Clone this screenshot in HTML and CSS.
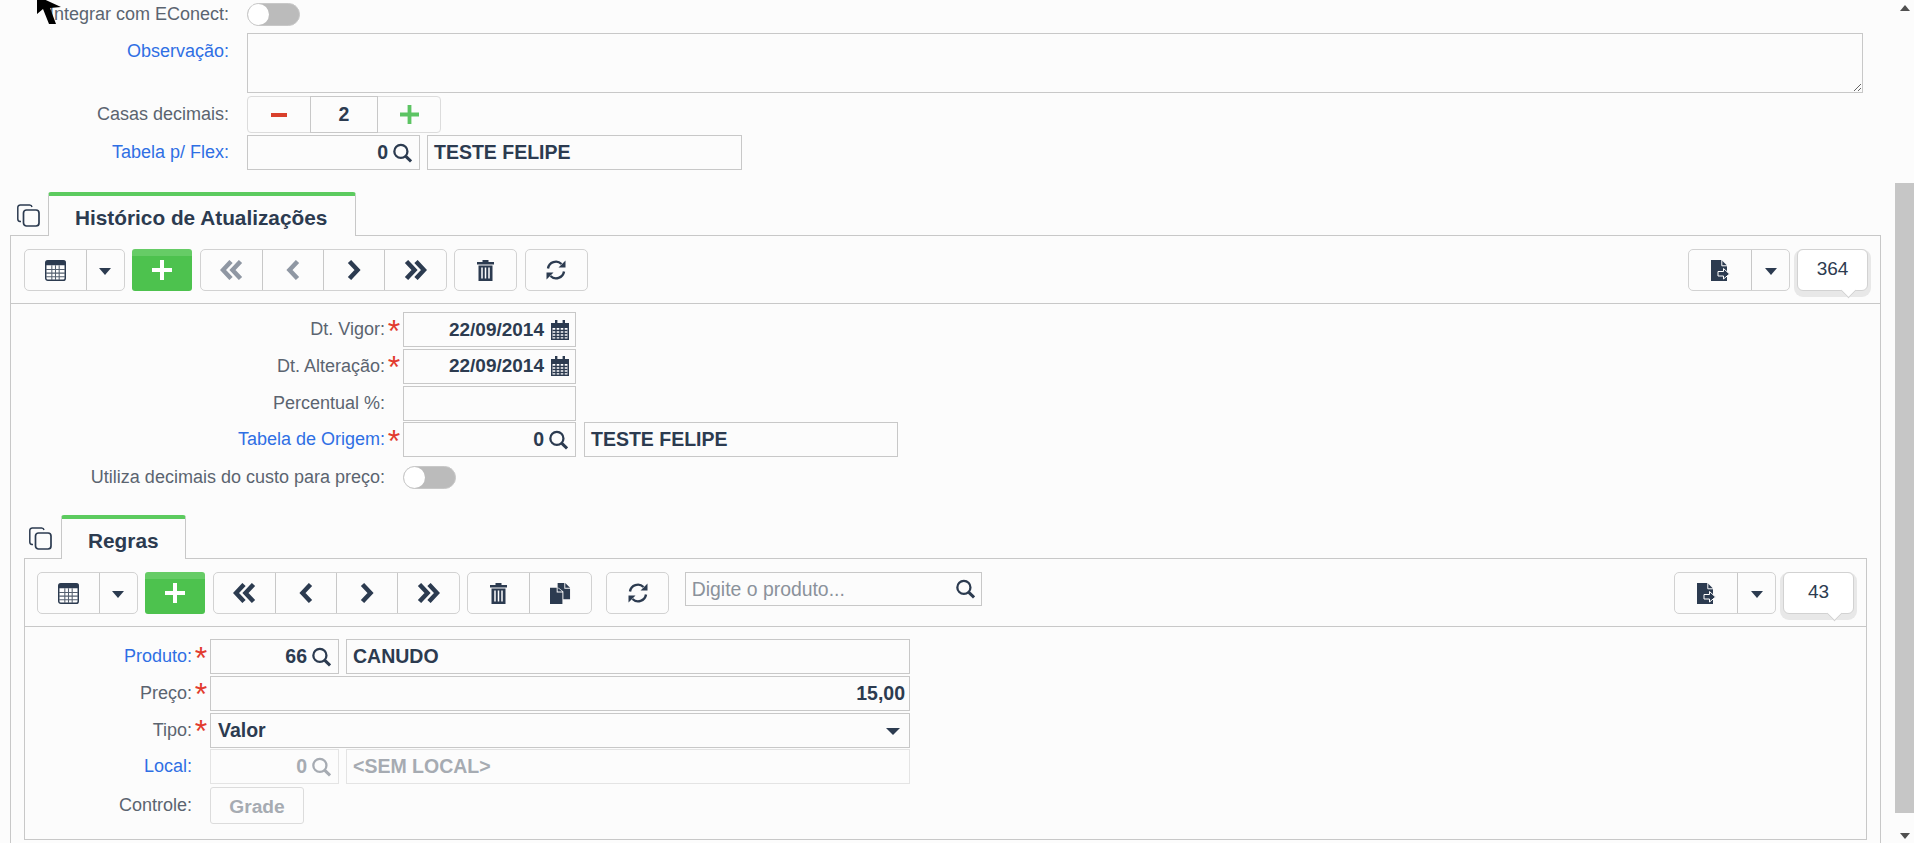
FILE: index.html
```html
<!DOCTYPE html>
<html lang="pt-BR">
<head>
    <meta charset="UTF-8">
    <title>Tabela de Preços</title>
    <link rel="stylesheet" href="styles.css">
</head>
<body>
    <svg class="defs" aria-hidden="true">
        <symbol id="i-table" viewBox="0 0 20 20">
            <rect x="0.7" y="0.7" width="18.6" height="18.6" rx="2" fill="#fff" stroke="#2c3b50" stroke-width="1.4"/>
            <rect x="0.7" y="0.7" width="18.6" height="4.3" fill="#2c3b50"/>
            <path d="M1 9h18M1 12.5h18M1 16h18M6.5 5v14M10 5v14M13.5 5v14" stroke="#55606f" stroke-width="1" fill="none"/>
        </symbol>
        <symbol id="i-search" viewBox="0 0 20 20">
            <circle cx="8.300" cy="8.300" r="6.900" fill="none" stroke="currentColor" stroke-width="2.400"/>
            <path d="M13 13l6 6" stroke="currentColor" stroke-width="3.200" fill="none"/>
        </symbol>
        <symbol id="i-calendar" viewBox="0 0 18 20">
            <path d="M4 0h2.400v3H11.600V0H14v3h4v17H0V3h4z" fill="#2c3b50"/>
            <path d="M1.500 8h15v10.500h-15z" fill="#fff"/>
            <path d="M1.500 10.500h15M1.500 13.500h15M1.500 16.500h15M5 8v11M9 8v11M13 8v11" stroke="#2c3b50" stroke-width="1.400" fill="none"/>
        </symbol>
        <symbol id="i-plus" viewBox="0 0 20 20">
            <path d="M8 0h4v8h8v4h-8v8H8v-8H0V8h8z" fill="currentColor"/>
        </symbol>
        <symbol id="i-first" viewBox="0 0 23 20">
            <path d="M11 1.500L3 10l8 8.500M20.500 1.500L12.500 10l8 8.500" fill="none" stroke="currentColor" stroke-width="4.500"/>
        </symbol>
        <symbol id="i-prev" viewBox="0 0 14 20">
            <path d="M11.500 1.500L3.500 10l8 8.500" fill="none" stroke="currentColor" stroke-width="4.500"/>
        </symbol>
        <symbol id="i-next" viewBox="0 0 14 20">
            <path d="M2.500 1.500L10.500 10l-8 8.500" fill="none" stroke="currentColor" stroke-width="4.500"/>
        </symbol>
        <symbol id="i-last" viewBox="0 0 23 20">
            <path d="M2.500 1.500L10.500 10l-8 8.500M12 1.500L20 10l-8 8.500" fill="none" stroke="currentColor" stroke-width="4.500"/>
        </symbol>
        <symbol id="i-trash" viewBox="0 0 17 22">
            <path d="M5.500 3V1h6v2h5.500v2.500H0V3z" fill="#2c3b50"/>
            <path d="M1.500 6.500h14V22h-14z" fill="#2c3b50"/>
            <path d="M5 8.500v11M8.500 8.500v11M12 8.500v11" stroke="#fff" stroke-width="1.500"/>
        </symbol>
        <symbol id="i-refresh" viewBox="0 0 22 22">
            <path d="M3 9.500A8 8 0 0 1 16.500 5" fill="none" stroke="#2c3b50" stroke-width="2.400"/>
            <path d="M19 12.500A8 8 0 0 1 5.500 17" fill="none" stroke="#2c3b50" stroke-width="2.400"/>
            <path d="M20.500 1.500v7h-7zM1.500 20.500v-7h7z" fill="#2c3b50"/>
        </symbol>
        <symbol id="i-export" viewBox="0 0 19 21">
            <path d="M0 0h10.500L16 5.500V21H0z" fill="#2c3b50"/>
            <path d="M10.800 0v5.800H16.500" fill="none" stroke="#fff" stroke-width="1"/>
            <path d="M7 11.500h5.500V8.500l6 5.500-6 5v-3H7z" fill="#2c3b50" stroke="#fff" stroke-width="1"/>
        </symbol>
        <symbol id="i-copy" viewBox="0 0 23 23">
            <path d="M4 17.500H3a2.500 2.500 0 0 1-2.200-2.500V3.500A2.500 2.500 0 0 1 3.500 1h9a2.500 2.500 0 0 1 2.500 2" fill="none" stroke="#2c3b50" stroke-width="1.500"/>
            <rect x="6.500" y="6" width="15.500" height="16" rx="3" fill="none" stroke="#2c3b50" stroke-width="1.700"/>
        </symbol>
        <symbol id="i-docs" viewBox="0 0 22 22">
            <path d="M8 0h7v6h6v11h-7V9L9 5H8z" fill="#2c3b50"/>
            <path d="M16 0l5 5h-5z" fill="#2c3b50"/>
            <path d="M0 5h7v5h6v12H0z" fill="#2c3b50"/>
            <path d="M8 5l5 4h-5z" fill="#2c3b50"/>
        </symbol>
    </svg>

    <svg class="cursor" viewBox="0 0 26 26" aria-hidden="true">
        <path d="M1 -4L1 14L7 9L13 24H20L14 8L25 7z" fill="#000"/>
    </svg>

    <div class="page">
        <main class="content">
            <div class="top-form">
                <div class="row row-toggle">
                    <div class="label label-top">Integrar com EConect:</div>
                    <div class="toggle"><span class="knob"></span></div>
                </div>
                <div class="row row-obs">
                    <div class="label label-top link label-obs">Observação:</div>
                    <textarea class="obs"></textarea>
                </div>
                <div class="row row-step">
                    <div class="label label-top">Casas decimais:</div>
                    <div class="stepper">
                        <div class="step"><span class="minus"></span></div>
                        <div class="step-value">2</div>
                        <div class="step"><svg class="icon-plus-green"><use href="#i-plus"/></svg></div>
                    </div>
                </div>
                <div class="row row-lookup">
                    <div class="label label-top link">Tabela p/ Flex:</div>
                    <div class="field lookup w-flex">0<svg class="ic-search"><use href="#i-search"/></svg></div>
                    <div class="field text w-flex-name">TESTE FELIPE</div>
                </div>
            </div>

            <div class="tab-strip strip-main">
                <svg class="ic-copy"><use href="#i-copy"/></svg>
                <div class="tab tab-main">Histórico de Atualizações</div>
            </div>
            <section class="panel panel-main">
                <div class="toolbar">
                    <div class="group">
                        <div class="btn btn-view"><svg class="ic-table"><use href="#i-table"/></svg></div>
                        <div class="btn btn-caret"><span class="caret"></span></div>
                    </div>
                    <div class="btn-add"><svg class="ic-plus"><use href="#i-plus"/></svg></div>
                    <div class="group">
                        <div class="btn muted"><svg class="ic-double"><use href="#i-first"/></svg></div>
                        <div class="btn muted"><svg class="ic-single"><use href="#i-prev"/></svg></div>
                        <div class="btn"><svg class="ic-single"><use href="#i-next"/></svg></div>
                        <div class="btn"><svg class="ic-double"><use href="#i-last"/></svg></div>
                    </div>
                    <div class="group">
                        <div class="btn"><svg class="ic-trash"><use href="#i-trash"/></svg></div>
                    </div>
                    <div class="group">
                        <div class="btn"><svg class="ic-refresh"><use href="#i-refresh"/></svg></div>
                    </div>
                    <div class="toolbar-right">
                        <div class="group">
                            <div class="btn btn-export"><svg class="ic-export"><use href="#i-export"/></svg></div>
                            <div class="btn btn-caret"><span class="caret"></span></div>
                        </div>
                        <div class="badge">364</div>
                    </div>
                </div>

                <div class="form form-main">
                    <div class="row">
                        <div class="label">Dt. Vigor:</div><div class="req">*</div>
                        <div class="field date w-short">22/09/2014<svg class="ic-cal"><use href="#i-calendar"/></svg></div>
                    </div>
                    <div class="row">
                        <div class="label">Dt. Alteração:</div><div class="req">*</div>
                        <div class="field date w-short">22/09/2014<svg class="ic-cal"><use href="#i-calendar"/></svg></div>
                    </div>
                    <div class="row">
                        <div class="label">Percentual %:</div><div class="req"></div>
                        <div class="field w-short"></div>
                    </div>
                    <div class="row">
                        <div class="label link">Tabela de Origem:</div><div class="req">*</div>
                        <div class="field lookup w-short">0<svg class="ic-search"><use href="#i-search"/></svg></div>
                        <div class="field text w-origin">TESTE FELIPE</div>
                    </div>
                    <div class="row row-switch">
                        <div class="label">Utiliza decimais do custo para preço:</div><div class="req"></div>
                        <div class="toggle"><span class="knob"></span></div>
                    </div>
                </div>

                <div class="tab-strip strip-sub">
                    <svg class="ic-copy"><use href="#i-copy"/></svg>
                    <div class="tab tab-sub">Regras</div>
                </div>
                <section class="panel panel-sub">
                    <div class="toolbar">
                        <div class="group">
                            <div class="btn btn-view"><svg class="ic-table"><use href="#i-table"/></svg></div>
                            <div class="btn btn-caret"><span class="caret"></span></div>
                        </div>
                        <div class="btn-add"><svg class="ic-plus"><use href="#i-plus"/></svg></div>
                        <div class="group">
                            <div class="btn"><svg class="ic-double"><use href="#i-first"/></svg></div>
                            <div class="btn"><svg class="ic-single"><use href="#i-prev"/></svg></div>
                            <div class="btn"><svg class="ic-single"><use href="#i-next"/></svg></div>
                            <div class="btn"><svg class="ic-double"><use href="#i-last"/></svg></div>
                        </div>
                        <div class="group">
                            <div class="btn"><svg class="ic-trash"><use href="#i-trash"/></svg></div>
                            <div class="btn"><svg class="ic-docs"><use href="#i-docs"/></svg></div>
                        </div>
                        <div class="group group-wide">
                            <div class="btn"><svg class="ic-refresh"><use href="#i-refresh"/></svg></div>
                        </div>
                        <div class="search">Digite o produto...<svg class="ic-search"><use href="#i-search"/></svg></div>
                        <div class="toolbar-right">
                            <div class="group">
                                <div class="btn btn-export"><svg class="ic-export"><use href="#i-export"/></svg></div>
                                <div class="btn btn-caret"><span class="caret"></span></div>
                            </div>
                            <div class="badge">43</div>
                        </div>
                    </div>

                    <div class="form form-sub">
                        <div class="row">
                            <div class="label link">Produto:</div><div class="req">*</div>
                            <div class="field lookup w-prod">66<svg class="ic-search"><use href="#i-search"/></svg></div>
                            <div class="field text w-prod-name">CANUDO</div>
                        </div>
                        <div class="row">
                            <div class="label">Preço:</div><div class="req">*</div>
                            <div class="field number w-full">15,00</div>
                        </div>
                        <div class="row">
                            <div class="label">Tipo:</div><div class="req">*</div>
                            <div class="field select w-full">Valor<span class="select-caret"></span></div>
                        </div>
                        <div class="row">
                            <div class="label link">Local:</div><div class="req"></div>
                            <div class="field lookup off w-prod">0<svg class="ic-search"><use href="#i-search"/></svg></div>
                            <div class="field text off w-prod-name">&lt;SEM LOCAL&gt;</div>
                        </div>
                        <div class="row row-grade">
                            <div class="label">Controle:</div><div class="req"></div>
                            <div class="btn-grade">Grade</div>
                        </div>
                    </div>
                </section>
            </section>
        </main>

        <div class="scrollbar">
            <span class="arrow-up"></span>
            <div class="thumb"></div>
            <span class="arrow-down"></span>
        </div>
    </div>
</body>
</html>
```

FILE: styles.css
```css
* {
    box-sizing: border-box;
}
html, body {
    margin: 0;
    height: 843px;
    overflow: hidden;
}
body {
    background: #fcfcfc;
    color: #2c3b50;
    font-family: "Liberation Sans", Arial, sans-serif;
    font-size: 18px;
}
svg {
    display: block;
    flex: none;
}
.defs {
    width: 0;
    height: 0;
    position: absolute;
}
.cursor {
    position: absolute;
    left: 36px;
    top: 0;
    width: 26px;
    height: 26px;
}
.page {
    display: flex;
    height: 843px;
}
.content {
    flex: 1;
    padding: 3px 14px 0 10px;
    min-width: 0;
}

/* rows */
.row {
    display: flex;
    align-items: center;
}
.label {
    color: #5b6470;
    text-align: right;
    flex: none;
}
.link {
    color: #2f6fe4;
}
.req {
    flex: none;
    color: #e23b2e;
    font-size: 32px;
    line-height: 1;
    height: 30px;
    text-align: center;
}

/* top form */
.top-form .label {
    width: 219px;
    margin-right: 18px;
}
.row-toggle {
    height: 23px;
    margin-bottom: 7px;
}
.row-obs {
    align-items: flex-start;
    margin-bottom: 3px;
}
.label-obs {
    padding-top: 8px;
}
.obs {
    display: block;
    width: 1616px;
    height: 60px;
    margin: 0;
    background: #fcfcfc;
    border: 1px solid #c8c8c8;
    border-radius: 0;
    outline: none;
}
.row-step {
    height: 37px;
    margin-bottom: 2px;
}
.stepper {
    display: flex;
    height: 37px;
    border: 1px solid #dcdcdc;
    border-radius: 4px;
}
.step {
    width: 62px;
    display: flex;
    align-items: center;
    justify-content: center;
}
.step-value {
    width: 68px;
    margin: -1px 0;
    border: 1px solid #c8c8c8;
    font-size: 19.5px;
    font-weight: bold;
    display: flex;
    align-items: center;
    justify-content: center;
}
.minus {
    width: 16px;
    height: 4px;
    background: #d9402c;
}
.icon-plus-green {
    width: 19px;
    height: 19px;
    color: #5cc463;
}
.row-lookup {
    height: 35px;
}

/* fields */
.field {
    height: 35px;
    background: #fcfcfc;
    border: 1px solid #c8c8c8;
    font-size: 19.5px;
    font-weight: bold;
    display: flex;
    align-items: center;
    flex: none;
}
.lookup, .date, .number {
    justify-content: flex-end;
}
.lookup {
    padding-right: 7px;
}
.date {
    padding-right: 6px;
    font-size: 19px;
}
.number {
    padding-right: 4px;
}
.text {
    padding-left: 6px;
    margin-left: 7px;
}
.select {
    padding-left: 7px;
    justify-content: space-between;
    padding-right: 9px;
}
.select-caret {
    width: 0;
    height: 0;
    border-left: 7px solid transparent;
    border-right: 7px solid transparent;
    border-top: 7px solid #2c3b50;
    margin-top: 3px;
}
.off {
    border-color: #e4e4e4;
    color: #a6abb2;
}
.ic-search {
    width: 19px;
    height: 20px;
    margin-left: 5px;
    color: #2c3b50;
}
.off .ic-search {
    color: #a6abb2;
}
.ic-cal {
    width: 18px;
    height: 20px;
    margin-left: 7px;
}
.w-flex {
    width: 173px;
}
.w-flex-name {
    width: 315px;
}
.w-short {
    width: 173px;
}
.w-origin {
    width: 314px;
    margin-left: 8px;
}
.w-prod {
    width: 129px;
}
.w-prod-name {
    width: 564px;
}
.w-full {
    width: 700px;
}

/* toggle */
.toggle {
    display: flex;
    width: 53px;
    height: 23px;
    background: #bbb;
    border: 1px solid #c8c8c8;
    border-radius: 12px;
    flex: none;
}
.knob {
    width: 21px;
    height: 21px;
    background: #fff;
    border-radius: 50%;
}

/* tabs */
.tab-strip {
    display: flex;
    align-items: flex-end;
    position: relative;
    z-index: 1;
    margin-bottom: -1px;
}
.strip-main {
    margin-top: 22px;
    padding-left: 7px;
}
.strip-sub {
    margin-top: 26px;
    margin-left: 13px;
    margin-right: 13px;
    padding-left: 5px;
}
.ic-copy {
    width: 23px;
    height: 23px;
    margin-right: 8px;
    margin-bottom: 9px;
}
.strip-sub .ic-copy {
    margin-right: 9px;
}
.tab {
    height: 44px;
    padding-top: 3px;
    background: #fcfcfc;
    border: 1px solid #c8c8c8;
    border-top: 4px solid #5ccb5f;
    border-bottom: none;
    border-radius: 3px 3px 0 0;
    font-size: 20.8px;
    font-weight: bold;
    display: flex;
    align-items: center;
}
.tab-main {
    width: 308px;
    padding-left: 26px;
}
.tab-sub {
    width: 125px;
    padding-left: 26px;
}

/* panels */
.panel {
    border: 1px solid #c8c8c8;
}
.panel-main {
    height: 608px;
    border-bottom: none;
}
.panel-sub {
    margin: 0 13px;
}
.toolbar {
    display: flex;
    height: 68px;
    padding: 13px 12px 12px 13px;
    border-bottom: 1px solid #c8c8c8;
    gap: 7.5px;
}
.panel-sub .toolbar {
    padding-left: 12px;
}
.toolbar-right {
    display: flex;
    gap: 7px;
    margin-left: auto;
}
.group {
    display: flex;
    height: 42px;
    border: 1px solid #d2d2d2;
    border-radius: 5px;
}
.group-wide {
    margin: 0 7px;
}
.btn {
    width: 61.25px;
    display: flex;
    align-items: center;
    justify-content: center;
    border-left: 1px solid #c8c8c8;
}
.btn:first-child {
    border-left: none;
}
.muted {
    color: #8f97a3;
}
.btn-view {
    width: 60.5px;
}
.btn-caret {
    width: 38px;
}
.btn-export {
    width: 62px;
}
.caret {
    width: 0;
    height: 0;
    border-left: 6px solid transparent;
    border-right: 6px solid transparent;
    border-top: 7px solid #2c3b50;
    margin-top: 3px;
}
.btn-add {
    width: 60px;
    height: 42px;
    background: linear-gradient(#66cc66 0 7px, #4dc24e 7px);
    border-radius: 3px;
    display: flex;
    align-items: center;
    justify-content: center;
    color: #fff;
}
.ic-table {
    width: 21px;
    height: 21px;
}
.ic-plus {
    width: 20px;
    height: 20px;
}
.ic-double {
    width: 23px;
    height: 20px;
}
.ic-single {
    width: 14px;
    height: 20px;
}
.ic-trash {
    width: 17px;
    height: 22px;
}
.ic-refresh {
    width: 22px;
    height: 22px;
}
.ic-export {
    width: 19px;
    height: 21px;
}
.ic-docs {
    width: 21px;
    height: 21px;
}
.badge {
    position: relative;
    width: 71px;
    height: 42px;
    background: #fff;
    border: 1px solid #d2d2d2;
    border-radius: 6px;
    box-shadow: 0 3px 0 3px #e8e8e8;
    font-size: 19px;
    display: flex;
    align-items: center;
    justify-content: center;
    padding-bottom: 2px;
}
.badge::after {
    content: "";
    position: absolute;
    right: 13px;
    bottom: -6px;
    width: 10px;
    height: 10px;
    background: #fff;
    border-right: 1px solid #d2d2d2;
    border-bottom: 1px solid #d2d2d2;
    transform: rotate(45deg);
}
.search {
    width: 297px;
    height: 34px;
    margin-left: 1px;
    padding: 0 6px;
    border: 1px solid #c8c8c8;
    color: #8b929b;
    font-size: 19.4px;
    display: flex;
    align-items: center;
    justify-content: space-between;
}

/* forms inside panels */
.form {
    display: flex;
    flex-direction: column;
}
.form-main {
    padding-top: 8px;
    gap: 1.75px;
}
.form-main .label {
    width: 374px;
}
.form-main .req {
    width: 18px;
}
.form-main .row-switch {
    margin-top: 7px;
}
.row-switch .req {
    height: auto;
}
.form-sub {
    padding: 12px 0 15px;
    gap: 1.75px;
}
.form-sub .label {
    width: 167px;
}
.form-sub .req {
    width: 18px;
}
.row-grade {
    margin-top: 1px;
}
.btn-grade {
    width: 94px;
    height: 37px;
    padding-top: 2px;
    border: 1px solid #dcdcdc;
    border-radius: 3px;
    color: #a6abb2;
    font-size: 19.2px;
    font-weight: bold;
    display: flex;
    align-items: center;
    justify-content: center;
}

/* scrollbar */
.scrollbar {
    width: 19px;
    display: flex;
    flex-direction: column;
    align-items: center;
    flex: none;
}
.arrow-up, .arrow-down {
    width: 0;
    height: 0;
    border-left: 5.500px solid transparent;
    border-right: 5.500px solid transparent;
}
.arrow-up {
    margin-top: 5px;
    border-bottom: 6px solid #505050;
}
.arrow-down {
    margin-top: 20px;
    border-top: 6px solid #505050;
}
.thumb {
    width: 19px;
    height: 630px;
    margin-top: 172px;
    background: #c6c6c6;
}
```
